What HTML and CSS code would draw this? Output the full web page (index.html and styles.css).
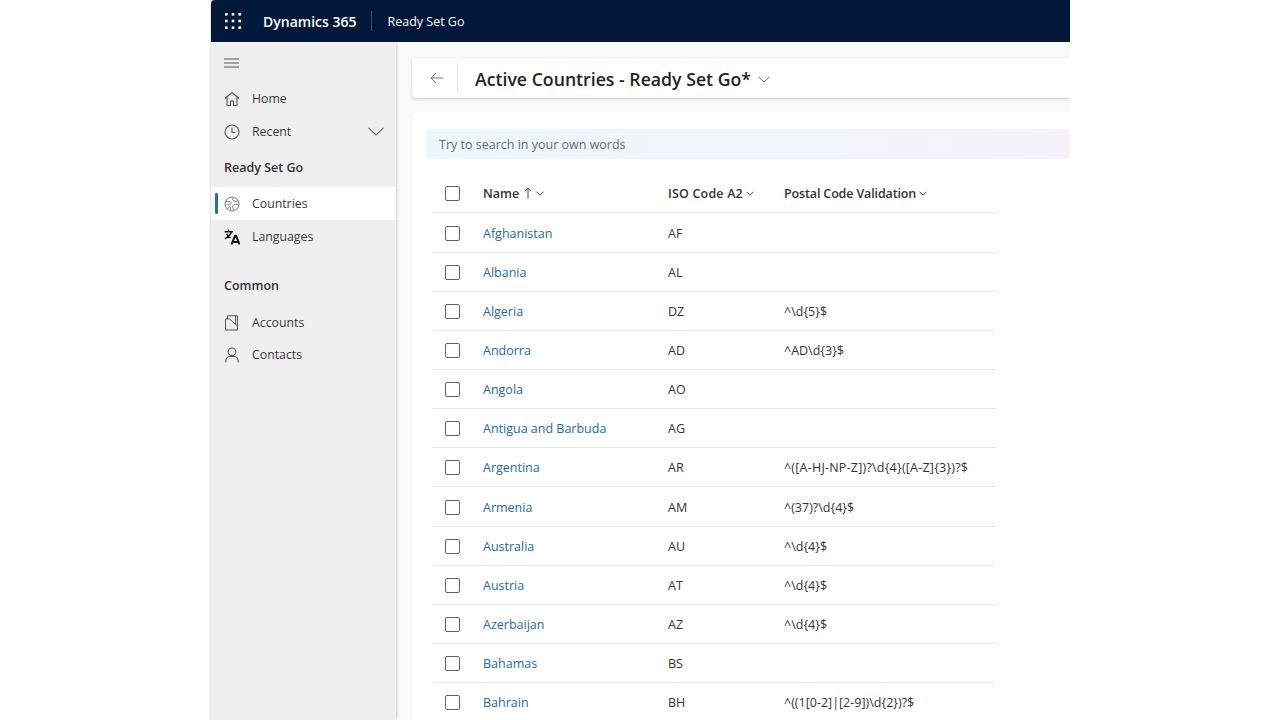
FILE: index.html
```html
<!DOCTYPE html>
<html lang="en">
<head>
<meta charset="utf-8">
<title>Active Countries - Ready Set Go</title>
<link rel="stylesheet" href="styles.css">
</head>
<body>
<div class="app">
  <header class="topbar">
    <svg class="waffle" viewBox="0 0 16 16" width="16" height="16"><g fill="#fff"><rect x="0" y="0" width="2.6" height="2.6"/><rect x="6.7" y="0" width="2.6" height="2.6"/><rect x="13.4" y="0" width="2.6" height="2.6"/><rect x="0" y="6.7" width="2.6" height="2.6"/><rect x="6.7" y="6.7" width="2.6" height="2.6"/><rect x="13.4" y="6.7" width="2.6" height="2.6"/><rect x="0" y="13.4" width="2.6" height="2.6"/><rect x="6.7" y="13.4" width="2.6" height="2.6"/><rect x="13.4" y="13.4" width="2.6" height="2.6"/></g></svg>
    <span class="brand">Dynamics 365</span>
    <span class="topsep"></span>
    <span class="appname">Ready Set Go</span>
  </header>
  <div class="body">
    <nav class="side">
      <div class="burger"><svg viewBox="0 0 16 10" width="16" height="10"><path d="M0 1h15M0 5h15M0 9h15" stroke="#555" stroke-width="1" fill="none"/></svg></div>
      <a class="nav-item"><svg class="nav-icon" viewBox="0 0 16 16"><path d="M1 7.500 8 1.500l7 6M3 6.200V14.500h3.500V10h3v4.500H13V6.200" fill="none" stroke="#555" stroke-width="1.100"/></svg><span>Home</span></a>
      <a class="nav-item"><svg class="nav-icon" viewBox="0 0 16 16"><circle cx="8" cy="8" r="7" fill="none" stroke="#555" stroke-width="1.100"/><path d="M8 3.500V8.500h3.500" fill="none" stroke="#555" stroke-width="1.100"/></svg><span class="grow">Recent</span><svg class="nav-chev" viewBox="0 0 16 9" width="16" height="9"><path d="M.5.800 8 8l7.500-7.200" fill="none" stroke="#666" stroke-width="1.100"/></svg></a>
      <div class="nav-group">Ready Set Go</div>
      <a class="nav-item active"><svg class="nav-icon" viewBox="0 0 16 16"><circle cx="8" cy="8" r="7" fill="none" stroke="#777" stroke-width="1"/><path d="M1.500 5.500h4.500l1.500 1.500-2 2-3-.5M9 1.500 8.500 4l2.500 1.500 3.500-.5M14.500 9 11 8 8.500 10l1 4M3.500 12.500 6 10.500l.8 3.800" fill="none" stroke="#888" stroke-width="1"/></svg><span>Countries</span></a>
      <a class="nav-item"><svg class="nav-icon" viewBox="0 0 16 16"><path d="M.5 2.800h8.500M4.500 .5v2.300M7.500 2.800C6.500 6 4 8.300 .8 9.800M2.600 4.800c.8 2 2.200 3.300 4 4" fill="none" stroke="#111" stroke-width="1.500"/><path d="M7.500 15.500 11 6.800h1l3.500 8.700M8.800 13h5.400" fill="none" stroke="#111" stroke-width="2"/></svg><span>Languages</span></a>
      <div class="nav-group second">Common</div>
      <a class="nav-item"><svg class="nav-icon" viewBox="0 0 16 16"><path d="M1.500 4H5.500L13.500 11V15H1.500ZM3.500 4V.8H13.500V11M11.500.8V9.300" fill="none" stroke="#555" stroke-width="1"/></svg><span>Accounts</span></a>
      <a class="nav-item tight"><svg class="nav-icon" viewBox="0 0 16 16"><circle cx="8" cy="4.800" r="3.800" fill="none" stroke="#555" stroke-width="1.100"/><path d="M1.800 15.500c0-4 2-6 4-6h4.400c2 0 4 2 4 6" fill="none" stroke="#555" stroke-width="1.100"/></svg><span>Contacts</span></a>
    </nav>
    <main class="main">
      <section class="cmd">
        <svg class="back" viewBox="0 0 14 12" width="14" height="12"><path d="M13.500 6H1M6 1 1 6l5 5" fill="none" stroke="#777" stroke-width="1"/></svg>
        <span class="cmdsep"></span>
        <h1 class="title">Active Countries - Ready Set Go*</h1>
        <svg class="title-chev" viewBox="0 0 12 7" width="12" height="7"><path d="M.5.800 6 6l5.500-5.200" fill="none" stroke="#666" stroke-width="1"/></svg>
      </section>
      <section class="card">
        <div class="search">Try to search in your own words</div>
        <div class="grid">
          <div class="row head">
            <div class="c-check"><span class="check"></span></div>
            <div class="c-name">Name<svg class="sort" viewBox="0 0 8 12" width="8" height="12"><path d="M4 11.500V1M.8 4 4 .8 7.200 4" fill="none" stroke="#444" stroke-width="1"/></svg><svg class="chev" viewBox="0 0 8 5" width="8" height="5"><path d="M.5.700 4 4.200 7.500.700" fill="none" stroke="#444" stroke-width="1"/></svg></div>
            <div class="c-iso iso-head">ISO Code A2<svg class="chev" viewBox="0 0 8 5" width="8" height="5"><path d="M.5.700 4 4.200 7.500.700" fill="none" stroke="#444" stroke-width="1"/></svg></div>
            <div class="c-post post-head">Postal Code Validation<svg class="chev" viewBox="0 0 8 5" width="8" height="5"><path d="M.5.700 4 4.200 7.500.700" fill="none" stroke="#444" stroke-width="1"/></svg></div>
          </div>
          <div class="row first"><div class="c-check"><span class="check"></span></div><a class="c-name link">Afghanistan</a><div class="c-iso">AF</div><div class="c-post"></div></div>
          <div class="row"><div class="c-check"><span class="check"></span></div><a class="c-name link">Albania</a><div class="c-iso">AL</div><div class="c-post"></div></div>
          <div class="row"><div class="c-check"><span class="check"></span></div><a class="c-name link">Algeria</a><div class="c-iso">DZ</div><div class="c-post">^\d{5}$</div></div>
          <div class="row"><div class="c-check"><span class="check"></span></div><a class="c-name link">Andorra</a><div class="c-iso">AD</div><div class="c-post">^AD\d{3}$</div></div>
          <div class="row"><div class="c-check"><span class="check"></span></div><a class="c-name link">Angola</a><div class="c-iso">AO</div><div class="c-post"></div></div>
          <div class="row"><div class="c-check"><span class="check"></span></div><a class="c-name link">Antigua and Barbuda</a><div class="c-iso">AG</div><div class="c-post"></div></div>
          <div class="row"><div class="c-check"><span class="check"></span></div><a class="c-name link">Argentina</a><div class="c-iso">AR</div><div class="c-post wide">^([A-HJ-NP-Z])?\d{4}([A-Z]{3})?$</div></div>
          <div class="row"><div class="c-check"><span class="check"></span></div><a class="c-name link">Armenia</a><div class="c-iso">AM</div><div class="c-post">^(37)?\d{4}$</div></div>
          <div class="row"><div class="c-check"><span class="check"></span></div><a class="c-name link">Australia</a><div class="c-iso">AU</div><div class="c-post">^\d{4}$</div></div>
          <div class="row"><div class="c-check"><span class="check"></span></div><a class="c-name link">Austria</a><div class="c-iso">AT</div><div class="c-post">^\d{4}$</div></div>
          <div class="row"><div class="c-check"><span class="check"></span></div><a class="c-name link">Azerbaijan</a><div class="c-iso">AZ</div><div class="c-post">^\d{4}$</div></div>
          <div class="row"><div class="c-check"><span class="check"></span></div><a class="c-name link">Bahamas</a><div class="c-iso">BS</div><div class="c-post"></div></div>
          <div class="row"><div class="c-check"><span class="check"></span></div><a class="c-name link">Bahrain</a><div class="c-iso">BH</div><div class="c-post">^((1[0-2]|[2-9])\d{2})?$</div></div>
        </div>
      </section>
    </main>
  </div>
</div>
</body>
</html>
```
FILE: styles.css
```css
* { box-sizing: border-box; }
html, body { margin: 0; height: 100%; background: #fff; overflow: hidden; }
body { font-family: "Open Sans", "Noto Sans", "Liberation Sans", sans-serif; font-size: 12.500px; color: #333; }
.app { width: 859px; height: 720px; margin-left: 211px; display: flex; flex-direction: column; overflow: hidden; border-top-left-radius: 4px; box-shadow: -1px 0 0 #e6e6e6; }
.topbar { height: 42px; flex: none; background: #01183a; color: #fff; display: flex; align-items: center; padding-left: 14px; }
.waffle { flex: none; }
.brand { margin-left: 22px; font-size: 14px; font-weight: 600; }
.topsep { width: 1px; height: 20px; background: #3a4c69; margin-left: 15px; }
.appname { margin-left: 15px; font-size: 12.500px; }
.body { flex: 1; display: flex; min-height: 0; }
.side { width: 185px; flex: none; background: #efefef; box-shadow: 1px 0 3px rgba(0,0,0,.18); padding-top: 16px; position: relative; z-index: 1; font-size: 12.300px; }
.burger { height: 10px; padding-left: 13px; display: flex; margin-bottom: 14px; }
.nav-item { height: 33px; display: flex; align-items: center; padding-left: 13px; color: #3a3a3a; position: relative; }
.nav-item.tight { margin-top: -1px; }
.nav-icon { width: 16px; height: 16px; flex: none; margin-right: 12px; }
.grow { flex: 1; }
.nav-chev { margin-right: 12px; }
.nav-item.active { background: #fff; }
.nav-item.active::before { content: ""; position: absolute; left: 4px; top: 6px; bottom: 6px; width: 3px; background: #2f6fb0; border-radius: 1px; }
.nav-group { height: 39px; padding-left: 13px; display: flex; align-items: center; font-weight: 600; color: #333; font-size: 12.500px; }
.nav-group.second { height: 53px; padding-top: 12px; }
.main { flex: 1; min-width: 0; background: #fafafa; padding: 16px 0 0 16px; overflow: hidden; }
.cmd { height: 40px; background: #fff; border-radius: 4px 0 0 4px; box-shadow: 0 1px 3px rgba(0,0,0,.2); display: flex; align-items: center; }
.back { margin-left: 18px; }
.cmdsep { width: 1px; height: 30px; background: #e2e2e2; margin-left: 13px; }
.title { margin: 2px 0 0 17px; font-size: 17.700px; font-weight: 600; color: #242424; }
.title-chev { margin: 2px 0 0 7px; }
.card { margin-top: 15px; background: #fff; border-radius: 4px 0 0 0; padding: 16px 0 0 14px; height: 620px; box-shadow: 0 1px 2px rgba(0,0,0,.06); }
.search { height: 30px; background: linear-gradient(90deg, #ecf6fc 0%, #f1f6fc 60%, #f5f2fc 100%); border-radius: 4px 0 0 4px; padding-left: 13px; display: flex; align-items: center; color: #6b6b6b; }
.grid { width: 563px; margin: 14px 0 0 7px; }
.row { height: 39.090px; display: flex; align-items: center; border-bottom: 1px solid #e8e8e8; padding: 1px 0 0 12px; }
.row.first { height: 40px; padding-top: 2px; }
.row.head { height: 40px; padding-top: 1px; font-weight: 600; color: #333; }
.c-check { width: 38px; flex: none; display: flex; align-items: center; }
.check { width: 15px; height: 15px; border: 1px solid #616161; border-radius: 2px; background: #fff; }
.c-name { width: 185px; flex: none; display: flex; align-items: center; }
.c-iso { width: 116px; flex: none; }
.c-post { flex: 1; }
.wide { letter-spacing: .22px; }
.iso-head { letter-spacing: .18px; }
.post-head { letter-spacing: -.14px; }
.link { color: #1f6aa5; }
.sort { margin-left: 5px; }
.chev { margin-left: 3px; vertical-align: 2px; }
.c-name .chev { margin-left: 4px; }
```
